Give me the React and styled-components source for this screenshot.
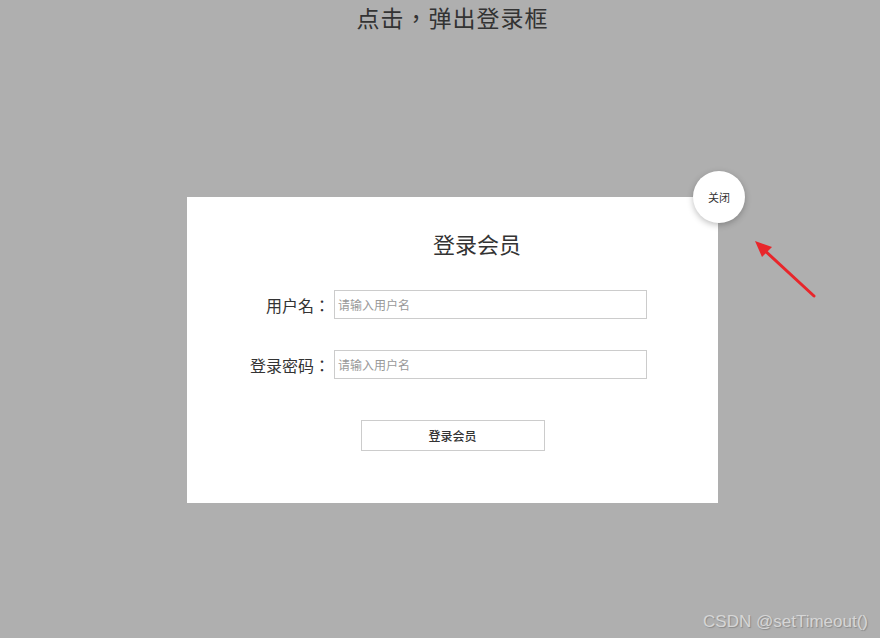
import React from "react";
import styled, { createGlobalStyle } from "styled-components";

const GlobalStyle = createGlobalStyle`
  html, body {
    margin: 0;
    padding: 0;
  }
  body {
    font-family: "Noto Sans CJK SC", "Liberation Sans", sans-serif;
    color: #333;
  }
  * {
    box-sizing: border-box;
  }
`;

function App() {
  return (
    <Page>
      <GlobalStyle />
      <Heading>点击，弹出登录框</Heading>
      <Modal>
        <CloseButton>关闭</CloseButton>
        <ModalTitle>登录会员</ModalTitle>
        <Form>
          <Row>
            <Label>用户名：</Label>
            <Input placeholder="请输入用户名" />
          </Row>
          <Row $gap={31}>
            <Label>登录密码：</Label>
            <Input placeholder="请输入用户名" />
          </Row>
          <Submit>登录会员</Submit>
        </Form>
      </Modal>
      <Arrow width="70" height="66" viewBox="0 0 70 66">
        <line
          x1="64"
          y1="60"
          x2="12"
          y2="12"
          stroke="#e8262b"
          strokeWidth="3"
          strokeLinecap="round"
        />
        <polygon points="5,5 22,11 12,21" fill="#e8262b" />
      </Arrow>
      <Watermark>CSDN @setTimeout()</Watermark>
    </Page>
  );
}

export default App;

const Page = styled.div`
  position: relative;
  width: 880px;
  height: 638px;
  background: #afafaf;
  padding-left: 25px;
  display: flex;
  flex-direction: column;
  align-items: center;
  overflow: hidden;
`;
const Heading = styled.h1`
  margin: 0;
  font-family: "Noto Sans CJK TC", sans-serif;
  font-size: 23px;
  font-weight: normal;
  line-height: 34px;
  color: #333;
  letter-spacing: 1px;
`;
const Modal = styled.div`
  position: relative;
  margin-top: 163px;
  width: 531px;
  height: 306px;
  background: #fff;
  padding-top: 30px;
`;
const CloseButton = styled.div`
  position: absolute;
  top: -26px;
  right: -27px;
  width: 52px;
  height: 52px;
  border-radius: 50%;
  background: #fff;
  box-shadow: 0 2px 6px rgba(0, 0, 0, 0.25);
  display: flex;
  align-items: center;
  justify-content: center;
  font-size: 11px;
  color: #333;
  cursor: pointer;
`;
const ModalTitle = styled.h2`
  margin: 0;
  padding-left: 49px;
  text-align: center;
  font-size: 22px;
  font-weight: normal;
  line-height: 32px;
  color: #333;
`;
const Form = styled.div`
  display: flex;
  flex-direction: column;
  padding-top: 31px;
`;
const Row = styled.div`
  display: flex;
  align-items: center;
  height: 29px;
  margin-top: ${(p) => (p.$gap ? p.$gap : 0)}px;
`;
const Label = styled.label`
  width: 143px;
  margin-right: 4px;
  text-align: right;
  font-family: "Noto Sans CJK TC", sans-serif;
  font-size: 16px;
  color: #333;
`;
const Input = styled.input`
  width: 313px;
  height: 29px;
  border: 1px solid #ccc;
  padding: 0 3px;
  font-size: 12px;
  font-family: inherit;
  outline: none;
  &::placeholder {
    color: #999;
  }
`;
const Submit = styled.button`
  align-self: center;
  margin-top: 41px;
  width: 184px;
  height: 31px;
  background: #fff;
  border: 1px solid #ccc;
  font-family: inherit;
  font-size: 12px;
  font-weight: 500;
  color: #333;
  cursor: pointer;
`;
const Arrow = styled.svg`
  position: absolute;
  left: 750px;
  top: 236px;
`;
const Watermark = styled.div`
  position: absolute;
  right: 12px;
  bottom: 6px;
  font-family: "Liberation Sans", sans-serif;
  font-size: 17px;
  color: #d6d6d6;
  text-shadow: 1px 1px 1px #8a8a8a;
`;
